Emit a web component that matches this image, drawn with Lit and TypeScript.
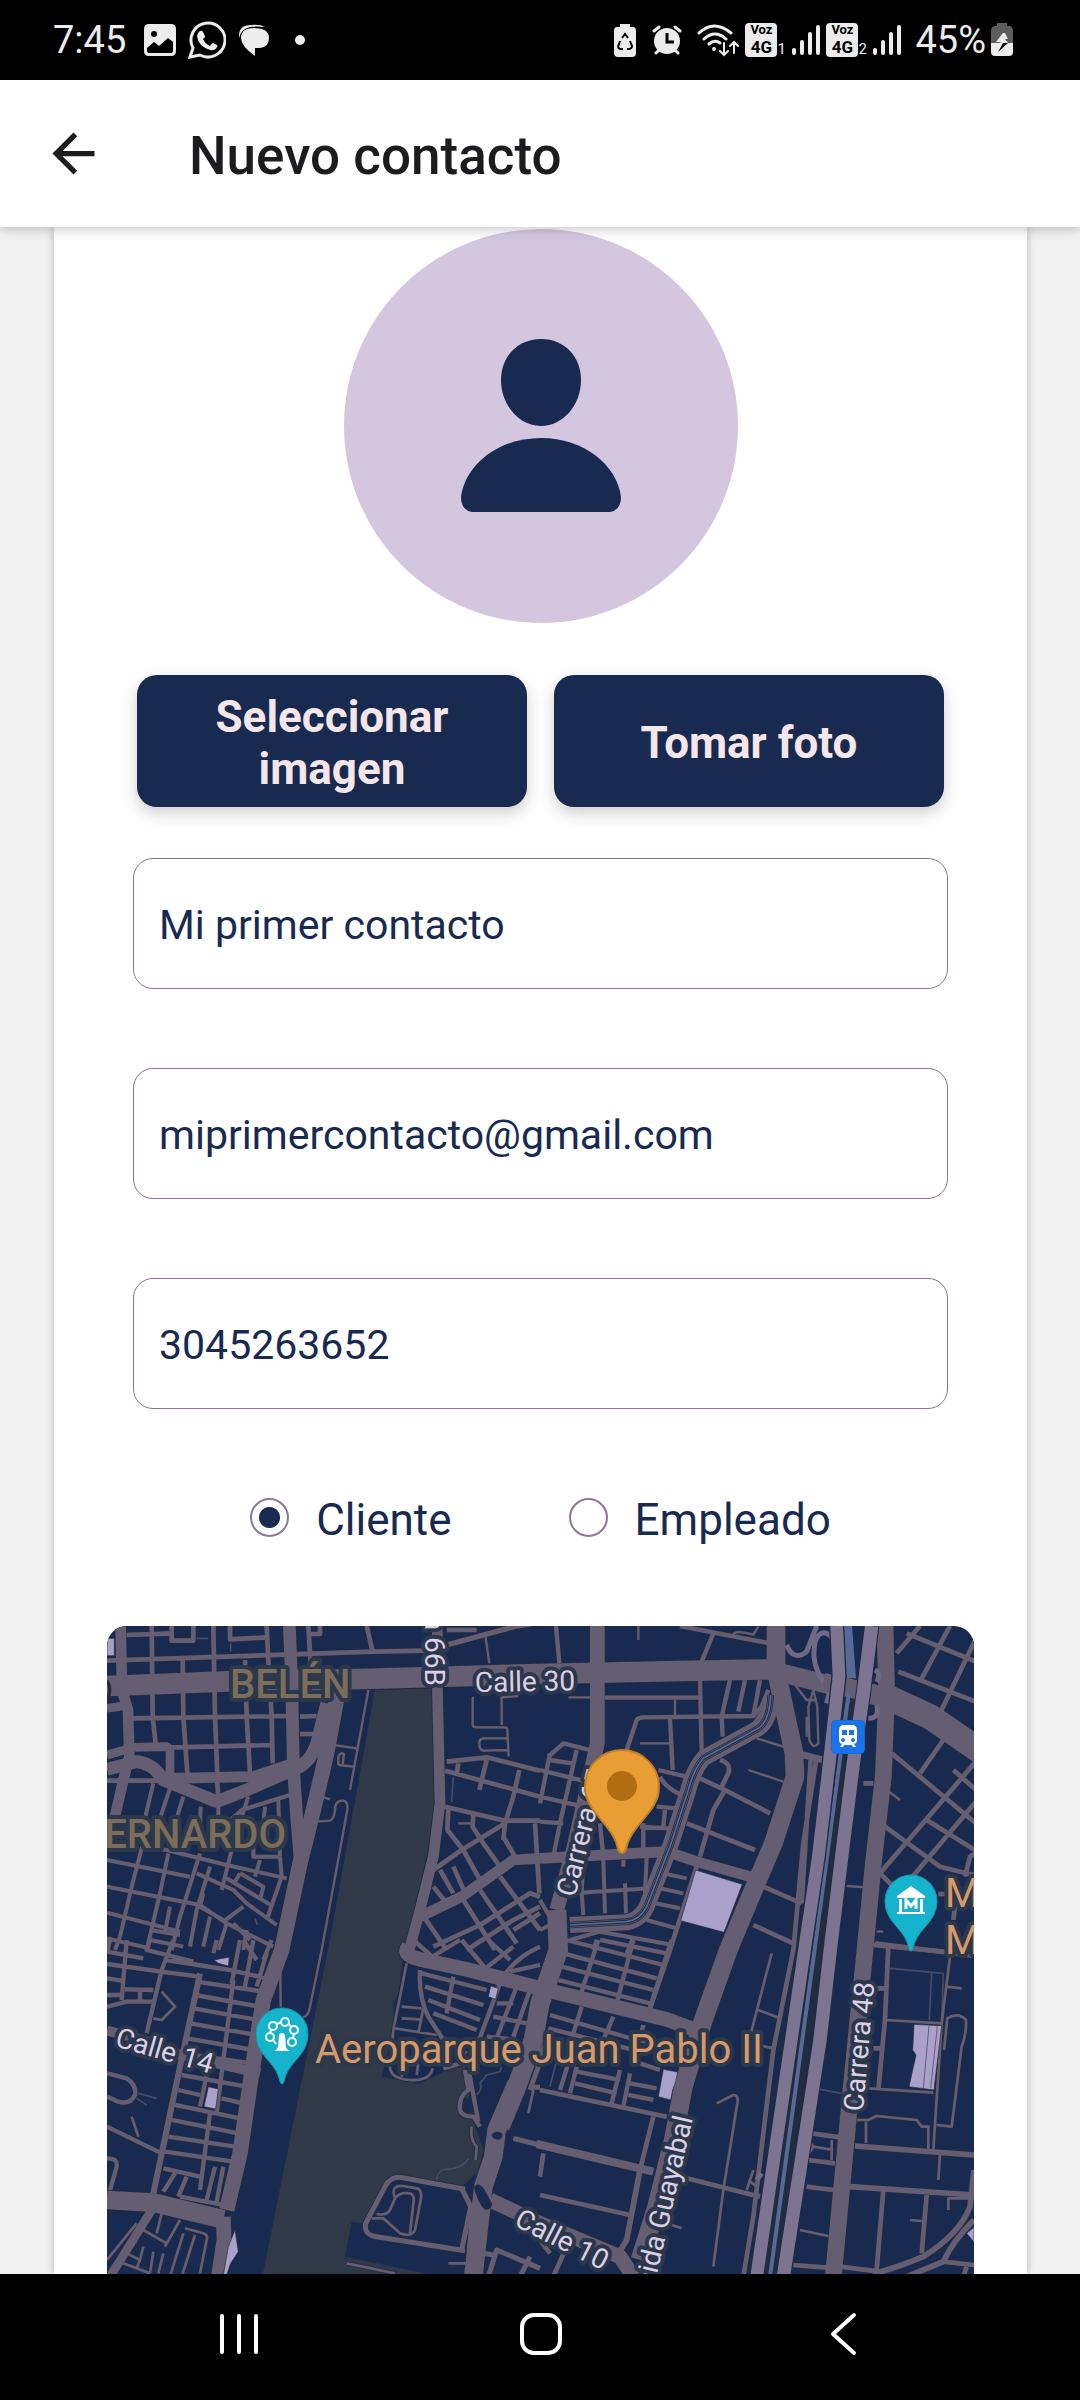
import { LitElement, html, css, svg } from "lit";
import { customElement, state } from "lit/decorators.js";

type Roads = { at: [number, number]; w: number; d: string };

/* Street geometry, one sheet per tile of the map; `at` is the origin of the tile. */
const NW: [number, number] = [0, 0];
const NE: [number, number] = [1320, 0];
const SW: [number, number] = [0, 990];
const SE: [number, number] = [1320, 990];

const ROADS: Roads[] = [
  /* north west */
  { at: NW, w: 7, d: "M805 240L750 540M700 405L770 415M715 465V440Q720 425 732 432L728 462M715 465L760 470M665 560L690 568M645 635L690 632Q702 628 705 600Q705 570 730 572Q745 575 742 600L665 1020L630 1190Q625 1220 608 1222M1118 260V345Q1120 352 1130 352H1215Q1222 352 1222 360L1226 440M1205 345V262L1255 258M1222 385H1150Q1138 385 1138 400Q1138 420 1150 422L1222 420M1155 70L1168 160M1075 640H1120M540 990L542 1190" },
  { at: NW, w: 14, d: "M80 75L215 70M215 48V92H280V48M390 48V88L500 82M21 152L820 125L980 122M95 325L560 318M100 415L520 405M155 48L158 320L168 410M248 150L250 320L262 490M340 48L345 320L352 495M435 150L440 320L450 490M500 48L508 210L515 320L518 460M625 48L635 210M660 48V72H625M800 48L818 125M600 320L650 318M600 372L640 372M21 512H200M350 495L355 560M1040 60H1130" },
  { at: NW, w: 14, d: "M1040 455L1160 442L1320 482M1035 482L1320 560M1075 460L1070 490M1160 450L1138 540M1258 480L1240 560L1215 640L1210 690M1035 590L1215 632H1320M1045 595L1042 660L1090 720L1140 810M1120 610L1118 650L1150 700L1200 770M1215 640L1085 720L1000 780M1210 680L1245 740M1000 830L1040 880M1060 770L1100 860M1200 800L1320 960M1140 840L1250 1000M1090 870L1185 1020M975 925L1040 1020M1000 1010L1140 945L1290 850L1320 860M1100 1020L1240 930L1320 890M1305 640L1318 850M1240 960L1320 910M1020 780L1060 850" },
  { at: NW, w: 12, d: "M250 560L225 640M210 535L180 625M160 520L135 625M302 590L300 640M355 580V630M445 560L425 620M495 590L490 640M535 570L540 740M380 640L425 600L570 555M21 750L270 800M21 830L120 850L300 885L380 940L520 1010M21 908L240 965M21 985L150 1015M150 990L250 1010M120 710L200 720L380 765L560 805M125 715L95 830L60 980L45 1020M205 730L180 850L140 1020M300 730L240 920L215 1020M290 790L400 840L440 880L530 945M330 770L290 900L270 1010M395 720L365 840M380 805L520 890M460 700V740H540M480 750L465 800M420 790L490 830L480 870M420 790L405 815M540 740L545 800L500 930M430 890L370 935M380 940L355 1020M440 960L430 1020M400 940L450 990M210 890L195 965M330 920L310 1010M150 960L240 975M310 850L300 890L370 930" },
  { at: NW, w: 16, d: "M1040 105L1250 48L1300 40" },
  { at: NW, w: 26, d: "M21 295L70 288M21 435L100 412L200 410Q210 412 210 430V490" },
  { at: NW, w: 32, d: "M62 48L66 240L84 300L88 440L70 510L40 640M200 505L460 500L580 460M1012 48V230L1020 580L1000 740L960 900L925 1030M960 920L1085 860L1240 750L1320 745" },
  { at: NW, w: 38, d: "M21 478L110 455Q160 460 190 510L350 575L440 540L600 470Q645 440 655 380L680 280M568 48L575 210L580 470L590 620L600 740" },
  { at: NW, w: 46, d: "M715 240L680 430L640 600L600 760L545 1020L490 1170L455 1390L420 1630L380 1800" },
  { at: NW, w: 62, d: "M21 228L385 214L780 207L1320 192L1740 183L2020 178" },
  /* north east */
  { at: NE, w: 7, d: "M295 48V90M580 72Q590 60 640 74L655 50M405 270V315M300 400H390M625 480L730 515M650 385L730 410M820 240L805 290L808 390Q820 420 835 400L832 290ZM800 320V380M1040 540L1080 570M920 828L980 832M85 262L150 262M765 225L800 270H830M1010 965H1030M1240 485L1262 495" },
  { at: NE, w: 13, d: "M48 48L58 160M520 70L485 155M420 48L690 100M195 263H475M480 210L485 430M260 420L290 330Q295 322 310 322L640 318L665 290L685 240M390 325L398 480M570 210L545 320L548 380M615 210L595 305M660 210L640 318M480 430L640 345L665 310M25 440L70 400L150 420M30 430L0 580M0 480L140 515M0 560L130 590M0 635L70 640M110 420L60 640L40 740M30 450L95 460M355 480L440 500M360 500Q380 540 440 560M180 640L190 740M310 640V730M375 600L370 650M300 650L385 655M350 590L410 595" },
  { at: NE, w: 12, d: "M130 750L125 850L130 915M190 750L195 910M250 750V770M255 820L258 910M320 740L315 850M95 850L330 835M370 790L440 805M360 835L430 850M345 880L420 895M320 930L410 955M90 990L180 965L400 1005M170 990L160 1020M280 980L260 1030M0 870L40 940M0 960L40 940" },
  { at: NE, w: 14, d: "M470 770L390 1020L325 1210M480 505L555 540L690 610M540 450Q575 460 565 490L545 530M555 540L520 600L480 740M440 640L645 720M670 830L785 880M640 945L760 1000M830 440L790 700L760 1020L700 1320L640 1820L610 2000M812 450L785 880" },
  { at: NE, w: 14, d: "M1140 48L1070 130M1100 70L1320 160M1075 185L1320 280M1230 48L1140 215M1320 60L1200 310M1055 430L1320 650M1035 650L1200 770L1320 800M1020 790L1320 440M1160 630L1320 730M1210 390L1140 490M1240 480L1320 550M1320 560L1160 750L1050 880M970 520H1000M1195 852H1320M1250 850L1240 930M1005 1000L1320 1040M1275 800L1290 740L1320 720M1020 790L1060 830H1120" },
  { at: NE, w: 20, d: "M770 430L850 450" },
  { at: NE, w: 32, d: "M0 745L380 725L470 755L630 800" },
  { at: NE, w: 44, d: "M172 48V400L100 720L50 900" },
  { at: NE, w: 48, d: "M692 265Q690 330 655 355L490 445Q460 480 445 540L390 710L320 890Q300 930 260 937L90 945" },
  { at: NE, w: 50, d: "M1035 48L1040 250L1030 500L1000 760L975 1020L930 1470L880 2000" },
  { at: NE, w: 56, d: "M690 180L870 225L1040 265M708 48V180L762 430L765 500L700 700L640 840L565 1020L490 1230L430 1430L400 1590L350 1790L300 1950" },
  { at: NE, w: 58, d: "M50 900L55 1020L0 1180L-20 1290L-70 1430L-120 1550" },
  { at: NE, w: 76, d: "M1050 265L1170 320L1330 430" },
  /* south west */
  { at: SW, w: 8, d: "M185 155L225 200L185 240L160 235M95 530L115 590M185 820L170 880M130 870L200 910M240 840L195 920M255 865L310 880Q325 885 320 900L300 1000M285 885L245 1010M250 880L210 1010M110 850L21 960M80 940L120 960L110 985M130 920L120 960M160 935L150 1000M190 940L175 1000M70 970L150 1000" },
  { at: SW, w: 8, d: "M920 70L880 270L870 380Q870 415 930 420Q990 425 998 385M905 200L965 205M905 235L960 238M885 265L1010 285M970 205L955 280M910 380L905 410M955 370L950 405M885 775Q870 735 910 738L950 745Q968 750 962 780L945 870Q935 892 900 880L850 835H815M885 775L870 810Q860 828 830 822M885 775Q900 755 930 760Q945 765 940 790L930 880M740 970L885 1000M1045 970H1100M1115 560Q1110 600 1130 620L1127 660M1300 450L1285 520M1105 930L1115 800" },
  { at: SW, w: 13, d: "M400 120L350 520M330 520L300 750M290 125L490 155M285 165L480 200M280 205L475 240M270 250L470 285M262 295L460 330M250 340L455 370M245 405L440 440M235 450L300 465M365 475L430 490M225 495L420 535M215 540L415 580M205 590L405 620M195 635L400 665M190 685L300 710M240 770L370 795M21 72L200 97L300 110M21 115L65 122M80 0L65 180M21 200L80 185H165M75 148L160 150M21 165H70M120 150V185M220 0L185 90L140 280M200 60L390 90L500 115M150 0L140 30L280 65M350 0L340 40M420 0L395 130M460 0L435 140M500 40L470 140M430 0L470 60M515 0L490 60M225 700L190 755M260 710L235 770M345 680L320 780M370 680L350 785M320 405L300 500M21 35L130 55M30 0L21 40" },
  { at: SW, w: 13, d: "M21 400L80 415Q110 435 105 465Q90 495 55 485L21 470M21 560L185 640M21 655Q55 655 50 680L30 750" },
  { at: SW, w: 13, d: "M960 90Q955 170 985 230L1030 300L1100 340M965 100L1160 150M975 140L1150 195M985 180L1140 240M1000 220L1130 270M1060 110L1040 220M1200 130L1130 320M1250 140L1180 320M1290 150L1240 290M1190 190H1240M1180 230L1280 250M1160 290L1250 300M940 0L1020 70M980 60L1080 0M1150 90L1240 20M1230 95L1320 75M1165 0L1230 60M1085 0L1160 90M1210 110Q1250 50 1320 20M1095 390L1105 450Q1075 470 1080 510Q1085 530 1120 530L1140 560M1108 400L1135 545M1030 385L1100 365" },
  { at: SW, w: 15, d: "M1095 748L900 712Q870 710 855 740L797 850Q790 885 830 890L1095 932M1085 745L1112 800L1085 930M1240 595L1320 615M1165 1010L1190 930L1320 985M1260 1010L1290 950M1150 940L1180 945M1290 442H1320M1315 380L1290 450" },
  { at: SW, w: 18, d: "M300 100L240 380L160 760" },
  { at: SW, w: 26, d: "M155 810L30 1010" },
  { at: SW, w: 30, d: "M21 272L130 300L240 345L480 400" },
  { at: SW, w: 44, d: "M925 20Q905 45 960 58L1100 88L1320 145L1700 238L1790 272M370 830L372 900L355 1010M1170 780L1320 850L1560 950L1600 1010" },
  { at: SW, w: 56, d: "M21 780L160 788L370 838M1250 430L1190 570L1180 650L1150 740L1120 1010" },
  /* south east */
  { at: SE, w: 8, d: "M695 40L630 290M655 210L720 235M630 310L700 325M530 490L580 465Q597 465 592 490L550 750L520 980M395 855L425 865M640 690L620 750M625 720L650 740M1035 240L1205 250M1230 50L1205 250L1180 630M1220 140L1265 145M1190 555L1235 560L1265 320Q1280 280 1278 240Q1255 215 1222 235L1212 330M985 445L1180 458M950 540H985L1010 528L1130 540L1145 560H1165V630M978 545V610M820 620L880 630M875 600V660M805 600L820 620L800 650M780 870L865 888M1200 645L1195 720M1285 775H1225V810M1110 840L1145 843" },
  { at: SE, w: 13, d: "M175 0L120 170M280 0L230 190M70 40L350 115M65 80L340 150M55 120L330 190M180 0L380 40M80 0L370 75M125 200L100 280M220 230L190 300M310 255L290 330M30 225L290 300L400 315M25 265L300 335M85 370L60 450M110 380L90 460M240 390L215 490M270 400L250 500M110 395L240 420M105 430L230 460M270 430L350 445M265 465L340 480M300 370L360 390M20 300L-10 370" },
  { at: SE, w: 14, d: "M395 0L325 220M0 450L380 530M340 530L300 690M0 765L270 825M10 640L0 710M80 920L40 1010M0 900L30 940M1000 15L1210 35M1045 20L1035 240L1015 450M1000 145H1040M1000 325H1020M815 580L900 592M805 660L885 670M800 740L880 750M1030 750L1010 990M1160 765L1145 940M760 975L890 985M900 980L1020 995M1210 965L1302 975M1280 980L1270 1010M440 715L660 770" },
  { at: SE, w: 17, d: "M300 690L260 900L230 950M945 618L1302 645M930 740L1302 765M1302 690L1290 800Q1260 880 1150 950Q1080 980 1000 1002M1302 840Q1240 900 1210 965L1100 1010" },
  { at: SE, w: 24, d: "M-10 612L340 695" },
];

const FAINT = [
  "M1060 500L1055 575M465 925L472 945M290 85H325M392 100V125",
  "M1010 1710Q1015 1675 1040 1678Q1090 1675 1105 1645M1130 1455Q1150 1435 1140 1420L1160 1395L1200 1385L1205 1370",
  "M115 1450L170 1465M110 1465L140 1485M2160 1438L2225 1450M1388 1282V1320M1370 1350L1350 1430",
  "M2370 1075L2530 1090L2525 1230M2495 1090L2488 1230",
].join("");

const HIGHWAY_WEST = "M2210 48L2217 200L2190 440L2155 740L2115 1010L1970 2000";
const HIGHWAY_EAST = "M2315 48L2290 250L2260 460L2230 700L2192 1010L2160 1290L2120 1550L2050 2000";
const RAMPS = "M2212 130Q2200 68 2170 68Q2140 75 2142 140Q2145 190 2190 240L2180 280M2060 105Q2080 155 2120 125L2150 48M2325 180Q2345 190 2330 215M2305 325Q2340 325 2330 285M1985 1690L1970 1710";
const RAIL = "M2248 190L2205 560L2145 1010L2010 2000";
const CANAL = "M2012 255Q2010 330 1975 355L1810 445Q1780 480 1765 540L1710 710L1640 890Q1620 930 1580 935L1410 945";

const PARK = "M825 240L995 235L1005 565L982 730L910 1040L895 1150L880 1180V1260L845 1400L960 1422L1040 1380L1095 1370L1120 1530L1150 1620L1135 1685L1085 1730L880 1700L790 1840L755 1835L735 1940L1000 1995H488L688 1000Z";

const BUILDINGS = "M21 85H43V137H21ZM342 1050L355 1060L385 1068L388 1042L368 1045ZM325 1430L355 1437L347 1497L312 1490ZM405 1860L415 1925L392 1960L380 1995H370L385 1910ZM1172 1128L1195 1135L1187 1168L1165 1160ZM1787 780L1927 823L1872 967L1742 932ZM1690 1378L1733 1386L1727 1415L1718 1440L1712 1470L1675 1460ZM2442 1243L2525 1247L2502 1440L2427 1430L2448 1335L2438 1320ZM2600 1870L2622 1852V1897Z";

@customElement("street-map")
export class StreetMap extends LitElement {
  static styles = css`
    :host {
      display: flex;
      overflow: hidden;
      background: #192a50;
    }
    .map {
      flex: 1;
      width: 100%;
      font-family: Roboto, "Liberation Sans", sans-serif;
    }
    .lines {
      fill: none;
      stroke-linejoin: round;
    }
    .casing { stroke: #222c41; }
    .road { stroke: #655e73; }
    .highway { stroke: #7c7491; }
    .ramp { stroke: #716984; stroke-width: 15; }
    .faint { stroke: #474c66; stroke-width: 5; }
    .water { stroke: #566a98; }
    .rail { fill: #566a98; }
    .park { fill: #303947; }
    .island { fill: #192a50; stroke: #222c41; stroke-width: 2; }
    .building { fill: #a9a1c9; stroke: #222c41; stroke-width: 2; }
    .label {
      font-size: 28px;
      fill: #dccfe6;
      stroke: #2b374a;
      stroke-width: 8px;
      stroke-linejoin: round;
      paint-order: stroke;
    }
    .district { font-size: 40px; font-weight: 500; fill: #7b6d59; }
    .place { font-size: 40px; fill: #d69a68; }
    .end { text-anchor: end; }
  `;

  private sheet(kind: "casing" | "road") {
    const extra = kind === "casing" ? 5 : 0;
    return svg`<g class="lines ${kind}">
      ${ROADS.map(
        (r) => svg`<path transform="translate(${r.at[0]} ${r.at[1]})" stroke-width=${r.w + extra} d=${r.d} />`,
      )}
    </g>`;
  }

  render() {
    return html`
      <svg class="map" viewBox="0 0 867 648" preserveAspectRatio="xMidYMin slice" role="img" aria-label="Mapa">
        <g transform="scale(0.33333) translate(-21 -48)">
          <path class="park" d=${PARK} />
          ${this.sheet("casing")}
          <path class="lines faint" d=${FAINT} />
          ${this.sheet("road")}
          <path class="island" d="M1175 1575Q1185 1560 1205 1570Q1210 1580 1200 1587Q1180 1590 1175 1575Z" />
          <path class="island" d="M1122 1732Q1135 1715 1150 1735L1175 1780Q1175 1800 1155 1798Q1140 1790 1122 1732Z" />
          <path class="island" d="M1092 1465H1110L1115 1505Q1100 1512 1090 1500Z" />
          <path class="building" d=${BUILDINGS} />
          <path class="lines road" stroke-width="3" d="M2487 1248L2470 1435M2512 1248L2492 1435" />
          <path class="lines casing" stroke-width="20" d=${CANAL} />
          <path class="lines road" stroke-width="15" d=${CANAL} />
          <path class="lines casing" stroke-width="11" d=${CANAL} />
          <path class="lines water" stroke-width="5" d=${CANAL} />
          <path class="lines ramp" d=${RAMPS} />
          <path class="lines casing" stroke-width="50" d=${RAIL} />
          <path class="rail" d="M2226 48H2256L2268 205H2240Z" />
          <path class="lines road" stroke-width="56" d="M2170 216L2360 260" />
          <path class="lines water" stroke-width="12" d="M2246 250L2205 560L2145 1010L2010 2000" />
          <path class="lines casing" stroke-width="46" d=${HIGHWAY_WEST} />
          <path class="lines casing" stroke-width="46" d=${HIGHWAY_EAST} />
          <path class="lines highway" stroke-width="38" d=${HIGHWAY_WEST} />
          <path class="lines highway" stroke-width="40" d=${HIGHWAY_EAST} />
          <path class="lines casing" stroke-width="10" d="M21 212Q38 240 21 272" />
        </g>

        <text class="label end" transform="translate(318 60) rotate(90)">Carrera 66B</text>
        <text class="label" transform="translate(368 66) rotate(-1)">Calle 30</text>
        <text class="label" transform="translate(7 420) rotate(16)">Calle 14</text>
        <text class="label" transform="translate(468 272) rotate(-76)">Carrera 65</text>
        <text class="label" transform="translate(406 599) rotate(27)">Calle 10</text>
        <text class="label" transform="translate(756 486) rotate(-85)">Carrera 48</text>
        <text class="label end" transform="translate(586 492) rotate(-77)">Avenida Guayabal</text>
        <text class="label district" x="123" y="72">BELÉN</text>
        <text class="label district end" x="179" y="222">ERNARDO</text>
        <text class="label place" x="208" y="437">Aeroparque Juan Pablo II</text>
        <text class="label place" x="838" y="281">M</text>
        <text class="label place" x="838" y="328">M</text>

        <g transform="translate(724 94)">
          <rect width="34" height="34" rx="5" fill="#1967d2" />
          <rect x="1" y="1" width="32" height="32" rx="4" fill="#1a73e8" />
          <path fill="#fff" d="M13 5h8q5 0 5 5v10q0 3-3 4l2 3h-3l-1-2h-8l-1 2H9l2-3q-3-1-3-4V10q0-5 5-5z" />
          <path fill="#1a73e8" d="M11 10h5v5h-5zM18 10h5v5h-5z" />
          <circle cx="12" cy="20" r="2" fill="#1a73e8" />
          <circle cx="22" cy="20" r="2" fill="#1a73e8" />
        </g>

        <g transform="translate(175 408)">
          <path fill="#15b4cc" stroke="#1897a8" stroke-width="1" d="M0 50C-2 50-2 46-4 41C-9 27-26 20-26 0A26 26 0 0 1 26 0C26 20 9 27 4 41C2 46 2 50 0 50Z" />
          <g fill="none" stroke="#fff" stroke-width="2">
            <circle cx="-12" cy="3" r="4" /><circle cx="-9" cy="-8" r="4" /><circle cx="3" cy="-12" r="4" />
            <circle cx="12" cy="-4" r="4" /><circle cx="10" cy="8" r="4" />
            <path d="M-5-10L-1-12M7-10L9-7M12 0L11 4M-11-4L-12-1M-9 6L-6 10" />
          </g>
          <path fill="#fff" d="M-3 2A3 3 0 1 1 3 2L4 13Q5 16 8 17H-8Q-5 16-4 13Z" />
        </g>

        <g transform="translate(804 275)">
          <path fill="#15b4cc" stroke="#1897a8" stroke-width="1" d="M0 50C-2 50-2 46-4 41C-9 27-26 20-26 0A26 26 0 0 1 26 0C26 20 9 27 4 41C2 46 2 50 0 50Z" />
          <path fill="#fff" d="M0-15L14-5V-3H-14V-5ZM-12-2H12V11H14V13H-14V11H-12Z" />
          <path fill="#15b4cc" d="M-9-3H9V11H-9Z" />
          <path fill="none" stroke="#fff" stroke-width="3" d="M-5 8V-1L0 5L5-1V8" />
        </g>

        <g transform="translate(515 161)">
          <path fill="#e99d35" stroke="#c47f22" stroke-width="2" d="M0 66C-4 66-4 61-6 55C-13 35-37 24-37 0A37 37 0 0 1 37 0C37 24 13 35 6 55C4 61 4 66 0 66Z" />
          <circle r="15" cy="-1" fill="#b26d12" />
        </g>
      </svg>
    `;
  }
}

@customElement("phone-status")
export class PhoneStatus extends LitElement {
  static styles = css`
    :host {
      display: flex;
      justify-content: space-between;
      align-items: center;
      height: 80px;
      box-sizing: border-box;
      padding: 0 67px 0 53px;
      background: #000;
      color: #ececec;
      font: 38px/44px Roboto, "Liberation Sans", sans-serif;
    }
    .group { display: flex; align-items: center; }
    .left { gap: 12px; }
    .right { gap: 6px; }
    .time { padding-right: 6px; }
    svg { display: block; fill: #ececec; }
    .line { fill: none; stroke: #ececec; stroke-linecap: round; }
    .volte { display: flex; align-items: flex-end; }
    .box {
      display: flex;
      flex-direction: column;
      align-items: center;
      justify-content: center;
      width: 32px;
      height: 34px;
      border-radius: 4px;
      background: #ececec;
      color: #000;
      font-weight: 700;
    }
    .voz { font-size: 13px; line-height: 14px; }
    .gen { font-size: 17px; line-height: 20px; }
    .sim { font-size: 15px; line-height: 16px; width: 9px; }
    .icons { display: flex; align-items: center; gap: 15px; }
    .charge { display: flex; align-items: center; gap: 5px; padding-left: 8px; }
  `;

  private signal(n: number) {
    return html`
      <div class="volte">
        <div class="box"><span class="voz">Voz</span><span class="gen">4G</span></div>
        <span class="sim">${n}</span>
      </div>
      <svg width="28" height="30" viewBox="0 0 28 30">
        <rect y="23" width="4" height="7" rx="2" /><rect x="8" y="15" width="4" height="15" rx="2" />
        <rect x="16" y="7" width="4" height="23" rx="2" /><rect x="24" width="4" height="30" rx="2" />
      </svg>
    `;
  }

  render() {
    return html`
      <div class="group left">
        <span class="time">7:45</span>
        <svg width="32" height="32" viewBox="0 0 32 32">
          <path fill-rule="evenodd" d="M5 0H27Q32 0 32 5V27Q32 32 27 32H5Q0 32 0 27V5Q0 0 5 0ZM10 7A3 3 0 1 0 10 13A3 3 0 1 0 10 7ZM3 24V27Q3 29 6 29H26Q29 29 29 27V18L24 14L15 22L10 18Z" />
        </svg>
        <svg width="38" height="38" viewBox="0 0 38 38">
          <path class="line" stroke-width="3" d="M2 36L5 27A17 17 0 1 1 12 34Z" />
          <path d="M12 10Q14 9 15 11L17 15Q17 17 15 18Q17 23 22 25Q24 22 25 22L29 24Q30 25 29 26Q27 30 22 29Q10 25 9 15Q9 12 12 10Z" />
        </svg>
        <svg width="32" height="34" viewBox="0 0 32 34">
          <path d="M1 15Q0 2 13 2Q22 1 27 4Q18 3 12 4Q3 6 1 15Z" />
          <path d="M16 5Q31 5 31 15Q31 24 22 25H17V33Q3 23 3 15Q3 5 16 5Z" />
        </svg>
        <svg width="32" height="10" viewBox="0 0 32 10"><circle cx="18" cy="5" r="5" /></svg>
      </div>
      <div class="group right">
        <div class="icons">
          <svg width="23" height="33" viewBox="0 0 23 33">
            <path d="M6 0H16V3H19Q22 3 22 7V29Q22 33 18 33H4Q0 33 0 29V7Q0 3 3 3H6Z" />
            <path fill="none" stroke="#000" stroke-width="2" d="M8 14L11 10L14 14M16 17L18 22Q18 25 14 25H13M9 25H6Q3 24 5 20L6 17" />
          </svg>
          <svg width="30" height="30" viewBox="0 0 30 30">
            <circle cx="15" cy="16" r="13" />
            <path class="line" stroke-width="3" d="M2 6L7 2M28 6L23 2M4 28L7 25M26 28L23 25" />
            <path fill="none" stroke="#000" stroke-width="3" d="M15 8V17H22" />
          </svg>
          <svg width="42" height="34" viewBox="0 0 42 34">
            <path class="line" stroke-width="3" d="M2 10Q17-4 34 10M7 16Q18 6 29 16M12 21Q18 16 23 20" />
            <circle cx="17" cy="26" r="2" />
            <path class="line" stroke-width="2" d="M27 20V32M23 28L27 32L31 28M37 30V19M33 23L37 19L41 23" />
          </svg>
        </div>
        ${this.signal(1)} ${this.signal(2)}
        <div class="charge">
          <span>45%</span>
          <svg width="22" height="34" viewBox="0 0 22 34">
            <path fill="#5c5c5c" d="M6 0H16V3H19Q22 4 22 8V20H0V8Q0 4 3 3H6Z" />
            <path d="M0 20H22V29Q22 33 18 33H4Q0 33 0 29Z" />
            <path d="M12 10L5 19H11L8 20H17L14 16L17 16L14 10Z" />
            <path fill="#000" d="M12 20H17L7 29L11 22Z" />
          </svg>
        </div>
      </div>
    `;
  }
}

@customElement("app-root")
export class AppRoot extends LitElement {
  static styles = css`
    :host {
      display: flex;
      flex-direction: column;
      height: 100vh;
      background: #f2f2f2;
      color: #192a50;
      font-family: Roboto, "Liberation Sans", sans-serif;
    }
    svg { display: block; }
    button { border: 0; padding: 0; margin: 0; font: inherit; background: none; cursor: pointer; }
    .appbar {
      display: flex;
      align-items: center;
      gap: 84px;
      height: 147px;
      box-sizing: border-box;
      padding: 0 42px;
      background: #fff;
      box-shadow: 0 2px 12px rgba(0, 0, 0, 0.24);
      z-index: 1;
    }
    .title {
      margin: 0;
      padding-top: 5px;
      color: #1c1c1e;
      font-size: 53px;
      font-weight: 500;
      line-height: 60px;
    }
    .card {
      flex: 1;
      min-height: 0;
      display: flex;
      flex-direction: column;
      margin: 0 53px 0 54px;
      padding: 2px 53px 0;
      overflow: hidden;
      background: #fff;
      box-shadow: 0 0 8px rgba(0, 0, 0, 0.25);
    }
    .avatar { align-self: center; flex: none; }
    .actions {
      display: grid;
      grid-template-columns: 1fr 1fr;
      gap: 27px;
      padding: 52px 30px 51px;
    }
    .action {
      height: 132px;
      padding: 4px 48px 0;
      border-radius: 20px;
      background: #192a50;
      color: #f5e6ea;
      font-size: 44px;
      font-weight: 700;
      line-height: 52px;
      box-shadow: 0 6px 16px rgba(0, 0, 0, 0.2);
    }
    .fields { display: flex; flex-direction: column; gap: 79px; padding: 0 26px; }
    .field {
      display: block;
      width: 100%;
      height: 131px;
      box-sizing: border-box;
      padding: 3px 25px 0;
      border: 1px solid #8b7296;
      border-radius: 20px;
      background: #fff;
      color: #192a50;
      font: 41px/48px Roboto, "Liberation Sans", sans-serif;
      outline: none;
    }
    .kinds {
      display: flex;
      justify-content: center;
      gap: 117px;
      margin: 0;
      padding: 89px 0 84px;
      border: 0;
    }
    .kind { display: flex; align-items: flex-start; gap: 27px; font-size: 44px; line-height: 44px; }
    .radio {
      appearance: none;
      width: 39px;
      height: 39px;
      margin: 0;
      border: 2px solid #8f7797;
      border-radius: 50%;
      background: #fff;
    }
    .radio:checked { background: radial-gradient(circle, #192a50 10px, #fff 11px); }
    .map { flex: 1; min-height: 0; border-radius: 20px 20px 0 0; }
    .nav {
      display: grid;
      grid-template-columns: repeat(3, 1fr);
      height: 126px;
      box-sizing: border-box;
      padding: 0 86px 6px 88px;
      background: #000;
      z-index: 1;
    }
    .key { display: flex; align-items: center; justify-content: center; }
    .glyph { fill: none; stroke: #fff; stroke-width: 4; stroke-linecap: round; stroke-linejoin: round; }
  `;

  @state() private kind = "Cliente";

  render() {
    return html`
      <phone-status></phone-status>
      <header class="appbar">
        <button aria-label="Volver">
          <svg width="63" height="63" viewBox="0 0 24 24">
            <path fill="#1c1c1e" d="M20 11H7.83l5.59-5.59L12 4l-8 8 8 8 1.41-1.41L7.83 13H20v-2z" />
          </svg>
        </button>
        <h1 class="title">Nuevo contacto</h1>
      </header>
      <main class="card">
        <svg class="avatar" width="394" height="394" viewBox="0 0 394 394" role="img" aria-label="Foto de contacto">
          <circle cx="197" cy="197" r="197" fill="#d4c6df" />
          <path fill="#192a50" d="M197 110C221 110 237 128 237 151C237 176 219 197 197 197C175 197 157 176 157 151C157 128 173 110 197 110Z" />
          <path fill="#192a50" d="M128 283Q117 281 117 268C121 236 154 209 197 209C240 209 273 236 277 268Q277 281 266 283Z" />
        </svg>
        <div class="actions">
          <button class="action">Seleccionar imagen</button>
          <button class="action">Tomar foto</button>
        </div>
        <div class="fields">
          <input class="field" type="text" aria-label="Nombre" .value=${"Mi primer contacto"} />
          <input class="field" type="email" aria-label="Correo" .value=${"miprimercontacto@gmail.com"} />
          <input class="field" type="tel" aria-label="Teléfono" .value=${"3045263652"} />
        </div>
        <fieldset class="kinds" aria-label="Tipo de contacto">
          ${["Cliente", "Empleado"].map(
            (k) => html`
              <label class="kind">
                <input class="radio" type="radio" name="kind" .checked=${this.kind === k} @change=${() => (this.kind = k)} />
                ${k}
              </label>
            `,
          )}
        </fieldset>
        <street-map class="map"></street-map>
      </main>
      <nav class="nav">
        <button class="key" aria-label="Recientes">
          <svg class="glyph" width="42" height="44" viewBox="0 0 42 44"><path d="M4 4V40M21 4V40M38 4V40" /></svg>
        </button>
        <button class="key" aria-label="Inicio">
          <svg class="glyph" width="44" height="44" viewBox="0 0 44 44"><rect x="3" y="3" width="38" height="38" rx="12" /></svg>
        </button>
        <button class="key" aria-label="Atrás">
          <svg class="glyph" width="28" height="44" viewBox="0 0 28 44"><path d="M25 3L4 22L25 41" /></svg>
        </button>
      </nav>
    `;
  }
}
